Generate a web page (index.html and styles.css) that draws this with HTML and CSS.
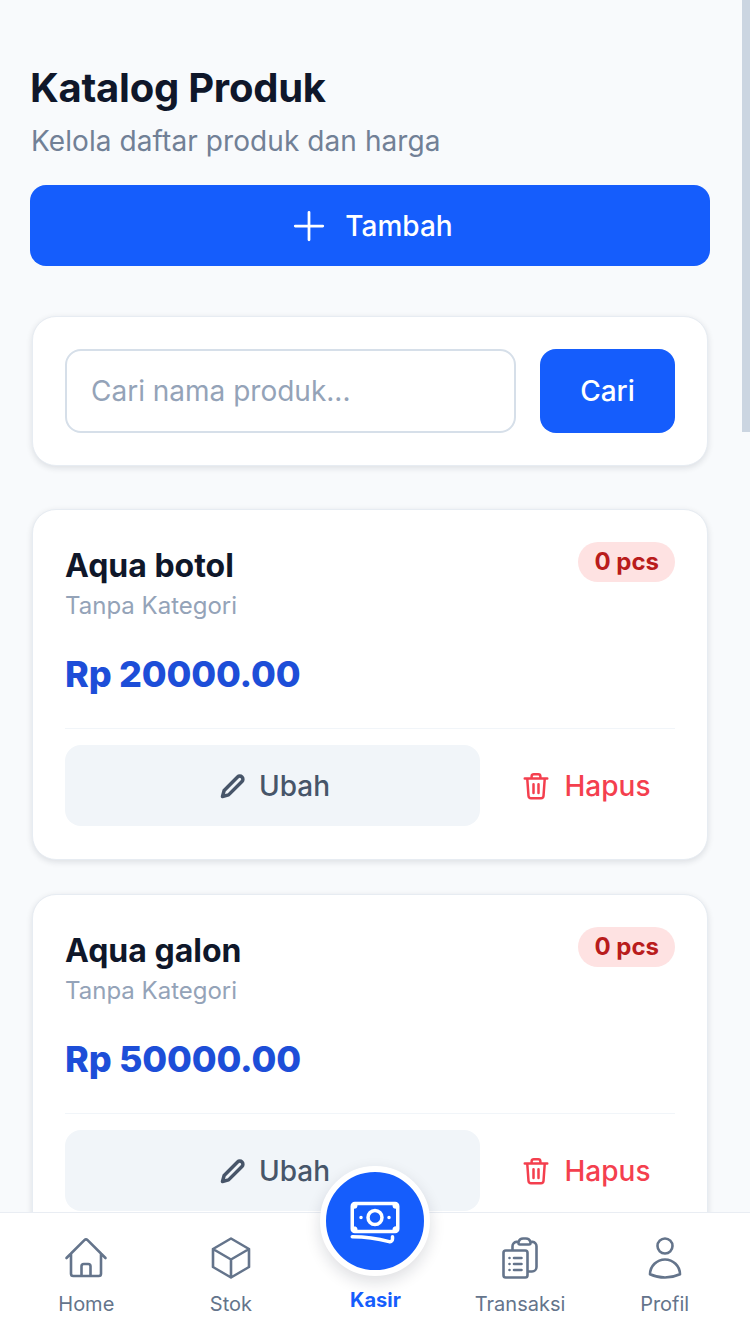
FILE: index.html
```html
<!DOCTYPE html>
<html>
<head>
  <title>Katalog Produk</title>
  <link rel="stylesheet" href="styles.css">
</head>
<body>
  <main class="page">
    <h1 class="title">Katalog Produk</h1>
    <p class="subtitle">Kelola daftar produk dan harga</p>
    <button class="add-btn">
      <svg class="add-icon" viewBox="0 0 24 24"><path d="M12 4.5v15m7.5-7.5h-15"/></svg>
      Tambah
    </button>

    <form class="card search">
      <input class="search-input" type="text" placeholder="Cari nama produk...">
      <button class="search-btn" type="button">Cari</button>
    </form>

    <div class="card product">
      <div class="product-top">
        <div>
          <h3 class="product-name">Aqua botol</h3>
          <div class="product-cat">Tanpa Kategori</div>
        </div>
        <span class="badge">0 pcs</span>
      </div>
      <div class="price">Rp 20000.00</div>
      <div class="actions">
        <button class="edit-btn">
          <svg class="act-icon pencil" viewBox="0 0 24 24"><path d="M3 21l1.4-5.2L15.9 4.3a2.6 2.6 0 0 1 3.8 3.8L8.2 19.6z"/></svg>
          Ubah
        </button>
        <button class="del-btn">
          <svg class="act-icon" viewBox="0 0 24 24"><path d="M3 6h18M8.5 6V4.2A1.7 1.7 0 0 1 10.2 2.5h3.6a1.7 1.7 0 0 1 1.7 1.7V6M5 6l1 14a2 2 0 0 0 2 1.8h8a2 2 0 0 0 2-1.8l1-14M10 10.5v7M14 10.5v7"/></svg>
          Hapus
        </button>
      </div>
    </div>

    <div class="card product">
      <div class="product-top">
        <div>
          <h3 class="product-name">Aqua galon</h3>
          <div class="product-cat">Tanpa Kategori</div>
        </div>
        <span class="badge">0 pcs</span>
      </div>
      <div class="price">Rp 50000.00</div>
      <div class="actions">
        <button class="edit-btn">
          <svg class="act-icon pencil" viewBox="0 0 24 24"><path d="M3 21l1.4-5.2L15.9 4.3a2.6 2.6 0 0 1 3.8 3.8L8.2 19.6z"/></svg>
          Ubah
        </button>
        <button class="del-btn">
          <svg class="act-icon" viewBox="0 0 24 24"><path d="M3 6h18M8.5 6V4.2A1.7 1.7 0 0 1 10.2 2.5h3.6a1.7 1.7 0 0 1 1.7 1.7V6M5 6l1 14a2 2 0 0 0 2 1.8h8a2 2 0 0 0 2-1.8l1-14M10 10.5v7M14 10.5v7"/></svg>
          Hapus
        </button>
      </div>
    </div>
  </main>

  <div class="scroll-thumb"></div>

  <nav class="bottom-nav">
    <a class="nav-item">
      <svg class="nav-icon" viewBox="0 0 24 24"><path d="m2.25 12 8.954-8.955c.44-.439 1.152-.439 1.591 0L21.75 12M4.5 9.75v10.125c0 .621.504 1.125 1.125 1.125H9.75v-4.875c0-.621.504-1.125 1.125-1.125h2.25c.621 0 1.125.504 1.125 1.125V21h4.125c.621 0 1.125-.504 1.125-1.125V9.75M8.25 21h8.25"/></svg>
      Home
    </a>
    <a class="nav-item">
      <svg class="nav-icon" viewBox="0 0 24 24"><path d="m21 7.5-9-5.25L3 7.5m18 0-9 5.25m9-5.25v9l-9 5.25M3 7.5l9 5.25M3 7.5v9l9 5.25m0-9v9"/></svg>
      Stok
    </a>
    <a class="nav-item nav-kasir">
      <span class="kasir-circle">
        <svg class="kasir-icon" viewBox="0 0 24 24"><path d="M2.25 18.75a60.07 60.07 0 0 1 15.797 2.101c.727.198 1.453-.342 1.453-1.096V18.75M3.75 4.5v.75A.75.75 0 0 1 3 6h-.75m0 0v-.375c0-.621.504-1.125 1.125-1.125H20.25M2.25 6v9m18-10.5v.75c0 .414.336.75.75.75h.75m-1.5-1.5h.375c.621 0 1.125.504 1.125 1.125v9.75c0 .621-.504 1.125-1.125 1.125h-.375m1.5-1.5H21a.75.75 0 0 0-.75.75v.75m0 0H3.75m0 0h-.375a1.125 1.125 0 0 1-1.125-1.125V15m1.5 1.5v-.75A.75.75 0 0 0 3 15h-.75M15 10.5a3 3 0 1 1-6 0 3 3 0 0 1 6 0Zm3 0h.008v.008H18V10.5Zm-12 0h.008v.008H6V10.5Z"/></svg>
      </span>
      Kasir
    </a>
    <a class="nav-item">
      <svg class="nav-icon" viewBox="0 0 24 24"><path d="M9 12h3.75M9 15h3.75M9 18h3.75m3 .75H18a2.25 2.25 0 0 0 2.25-2.25V6.108c0-1.135-.845-2.098-1.976-2.192a48.424 48.424 0 0 0-1.123-.08m-5.801 0c-.065.21-.1.433-.1.664 0 .414.336.75.75.75h4.5a.75.75 0 0 0 .75-.75 2.25 2.25 0 0 0-.1-.664m-5.8 0A2.251 2.251 0 0 1 13.5 2.25H15c1.012 0 1.867.668 2.15 1.586m-5.8 0c-.376.023-.75.05-1.124.08C9.095 4.01 8.25 4.973 8.25 6.108V8.25m0 0H4.875c-.621 0-1.125.504-1.125 1.125v11.25c0 .621.504 1.125 1.125 1.125h9.75c.621 0 1.125-.504 1.125-1.125V9.375c0-.621-.504-1.125-1.125-1.125H8.25ZM6.75 12h.008v.008H6.75V12Zm0 3h.008v.008H6.75V15Zm0 3h.008v.008H6.75V18Z"/></svg>
      Transaksi
    </a>
    <a class="nav-item">
      <svg class="nav-icon" viewBox="0 0 24 24"><path d="M15.75 6a3.75 3.75 0 1 1-7.5 0 3.75 3.75 0 0 1 7.5 0ZM4.501 20.118a7.5 7.5 0 0 1 14.998 0A17.933 17.933 0 0 1 12 21.75c-2.676 0-5.216-.584-7.499-1.632Z"/></svg>
      Profil
    </a>
  </nav>
</body>
</html>
```

FILE: styles.css
```css
* {
  box-sizing: border-box;
}

html, body {
  margin: 0;
  height: 1334px;
  overflow: hidden;
}

body {
  font-family: Inter, "Noto Sans", sans-serif;
  background-color: #f8fafc;
  color: #0f172a;
}

svg {
  fill: none;
  stroke: currentColor;
  stroke-linecap: round;
  stroke-linejoin: round;
  flex-shrink: 0;
}

button {
  font-family: inherit;
  border: none;
  cursor: pointer;
}

.page {
  padding: 64px 40px 0 30px;
}

.title {
  margin: 0;
  font-size: 40px;
  line-height: 48px;
  font-weight: 700;
  letter-spacing: -0.25px;
}

.subtitle {
  margin: 9px 0 24px 1px;
  font-size: 28px;
  line-height: 40px;
  letter-spacing: 0.08px;
  color: #718096;
}

.add-btn {
  display: flex;
  align-items: center;
  justify-content: center;
  gap: 14px;
  width: 100%;
  height: 81px;
  margin-bottom: 50px;
  background-color: #155dfc;
  color: white;
  border-radius: 16px;
  font-size: 28px;
  font-weight: 500;
}

.add-icon {
  width: 44px;
  height: 44px;
  stroke-width: 1.5;
}

.card {
  margin: 0 2px 43px;
  background-color: white;
  border: 1px solid #e7ecf2;
  border-radius: 24px;
  padding: 32px;
  box-shadow: 0 2px 6px rgba(15, 23, 42, 0.12);
}

.search {
  display: flex;
  gap: 24px;
}

.search-input {
  flex: 1;
  min-width: 0;
  height: 84px;
  padding: 0 24px;
  font-family: inherit;
  font-size: 28px;
  border: 2px solid #d6dfe9;
  border-radius: 16px;
  background-color: white;
}

.search-input::placeholder {
  color: #94a3b8;
  opacity: 1;
}

.search-btn {
  width: 135px;
  height: 84px;
  background-color: #155dfc;
  color: white;
  border-radius: 16px;
  font-size: 28px;
  font-weight: 500;
}

.product {
  margin-bottom: 34px;
  padding-bottom: 33px;
}

.product-top {
  display: flex;
  justify-content: space-between;
  align-items: flex-start;
}

.product-name {
  margin: 4px 0 0;
  font-size: 32px;
  line-height: 40px;
  font-weight: 700;
}

.product-cat {
  margin-top: 4px;
  font-size: 24px;
  line-height: 32px;
  color: #94a3b8;
}

.badge {
  padding: 0 16px;
  height: 40px;
  line-height: 40px;
  border-radius: 20px;
  background-color: #fee2e2;
  color: #b91c1c;
  font-size: 24px;
  font-weight: 700;
}

.price {
  margin-top: 30px;
  font-size: 36px;
  line-height: 44px;
  font-weight: 800;
  letter-spacing: -0.2px;
  color: #1d4ed8;
}

.actions {
  display: flex;
  align-items: center;
  gap: 16px;
  margin-top: 32px;
  padding-top: 16px;
  border-top: 1px solid #f1f5f9;
}

.edit-btn,
.del-btn {
  display: flex;
  align-items: center;
  justify-content: center;
  gap: 14px;
  height: 81px;
  font-size: 28px;
  font-weight: 500;
  border-radius: 16px;
}

.edit-btn {
  flex: 1;
  gap: 12px;
  padding-left: 10px;
  background-color: #f1f5f9;
  color: #475569;
}

.del-btn {
  width: 179px;
  background-color: white;
  color: #f43f4e;
}

.act-icon {
  width: 30px;
  height: 30px;
  stroke-width: 2;
}

.pencil {
  width: 28px;
  height: 28px;
  stroke-width: 3;
}

.scroll-thumb {
  position: fixed;
  top: 0;
  right: 0;
  width: 8px;
  height: 432px;
  background-color: #cbd5e1;
}

.bottom-nav {
  position: fixed;
  left: 0;
  right: 0;
  bottom: 0;
  height: 122px;
  display: flex;
  padding: 0 13px 0 14px;
  background-color: white;
  border-top: 1px solid #e9edf3;
}

.nav-item {
  flex: 1;
  display: flex;
  flex-direction: column;
  align-items: center;
  padding-top: 21px;
  gap: 8px;
  font-size: 20px;
  line-height: 28px;
  font-weight: 400;
  color: #64748b;
}

.nav-icon {
  width: 48px;
  height: 48px;
  stroke-width: 1.3;
}

.nav-kasir {
  position: relative;
  padding-top: 73px;
  font-weight: 700;
  color: #155dfc;
}

.kasir-circle {
  position: absolute;
  top: -47px;
  left: 50%;
  width: 110px;
  height: 110px;
  margin-left: -55px;
  display: flex;
  align-items: center;
  justify-content: center;
  background-color: #155dfc;
  color: white;
  border: 6px solid white;
  border-radius: 50%;
  box-shadow: 0 6px 16px rgba(15, 23, 42, 0.14);
}

.kasir-icon {
  width: 56px;
  height: 56px;
  stroke-width: 1.5;
}
```
